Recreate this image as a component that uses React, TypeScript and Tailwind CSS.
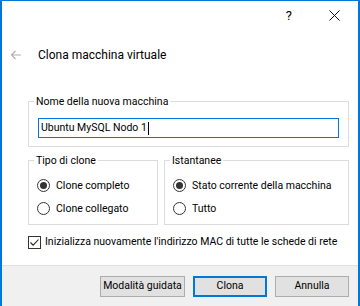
import React from 'react';

const font = { fontFamily: '"Segoe UI", Roboto, "Liberation Sans", Arial, sans-serif' };

const Radio = ({ checked, label }: { checked?: boolean; label: string }) => (
  <div className="flex items-center h-[23px] whitespace-nowrap">
    <span className="w-[13px] h-[13px] shrink-0 rounded-full border border-[#333] flex items-center justify-center bg-white">
      {checked && <span className="w-[7px] h-[7px] rounded-full bg-[#333]" />}
    </span>
    <span className="ml-[6px]">{label}</span>
  </div>
);

export default function App() {
  return (
    <div
      className="w-[360px] h-[306px] bg-white border-l-2 border-t border-r-2 border-[#0078d7] flex flex-col text-[10.5px] text-black overflow-hidden"
      style={font}
    >
      {/* barra del titolo */}
      <div className="h-[29px] flex items-center justify-end">
        <span className="text-[13px] mr-[37px]">?</span>
        <svg width="11" height="11" viewBox="0 0 11 11" className="mr-[18px]">
          <path d="M0.5 0.5 L10.5 10.5 M10.5 0.5 L0.5 10.5" stroke="#111" strokeWidth="1" />
        </svg>
      </div>

      {/* intestazione */}
      <div className="h-[50px] flex items-center">
        <svg width="12" height="10" viewBox="0 0 12 10" className="ml-[8px]">
          <path d="M11 5 H1.5 M5.5 1 L1.5 5 L5.5 9" fill="none" stroke="#b0b0b0" strokeWidth="1.2" />
        </svg>
        <span className="ml-[16px] text-[12px]">Clona macchina virtuale</span>
      </div>

      <div className="pl-[26px] pr-[9px] pt-[13px] flex flex-col">
        <fieldset className="border border-[#dcdcdc] px-[9px] pb-[8px] pt-[9px]">
          <legend className="-ml-[4px] px-[2px] pt-[2px] leading-[14px]">Nome della nuova macchina</legend>
          <div className="h-[20px] border border-[#0078d7] flex items-center pl-[2px]">
            <span>Ubuntu MySQL Nodo 1</span>
            <span className="w-px h-[13px] bg-black ml-px" />
          </div>
        </fieldset>

        <div className="flex gap-[6px] mt-[5px]">
          <fieldset className="w-[130px] h-[73px] border border-[#dcdcdc] pl-[8px] pt-[6px]">
            <legend className="-ml-[3px] px-[2px] pt-[2px] leading-[14px]">Tipo di clone</legend>
            <Radio checked label="Clone completo" />
            <Radio label="Clone collegato" />
          </fieldset>
          <fieldset className="flex-1 h-[73px] border border-[#dcdcdc] pl-[8px] pt-[6px]">
            <legend className="-ml-[3px] px-[2px] pt-[2px] leading-[14px]">Istantanee</legend>
            <Radio checked label="Stato corrente della macchina" />
            <Radio label="Tutto" />
          </fieldset>
        </div>

        <div className="flex items-center h-[16px] mt-[9px] whitespace-nowrap">
          <span className="w-[13px] h-[13px] shrink-0 border border-[#333] flex items-center justify-center">
            <svg width="11" height="11" viewBox="0 0 11 11">
              <path d="M1.5 5.5 L4.2 8.2 L9.5 2.5" fill="none" stroke="#222" strokeWidth="1.1" />
            </svg>
          </span>
          <span className="ml-[4px]">Inizializza nuovamente l'indirizzo MAC di tutte le schede di rete</span>
        </div>
      </div>

      {/* pulsanti */}
      <div className="mt-auto h-[41px] bg-[#f0f0f0] border-t border-[#dfdfdf] flex items-center justify-end gap-[8px] pr-[9px]">
        <button className="w-[85px] h-[21px] bg-[#e1e1e1] border border-[#adadad] whitespace-nowrap">Modalità guidata</button>
        <button className="w-[74px] h-[21px] bg-[#e1e1e1] border-2 border-[#0078d7]">Clona</button>
        <button className="w-[74px] h-[21px] bg-[#e1e1e1] border border-[#adadad]">Annulla</button>
      </div>
    </div>
  );
}
